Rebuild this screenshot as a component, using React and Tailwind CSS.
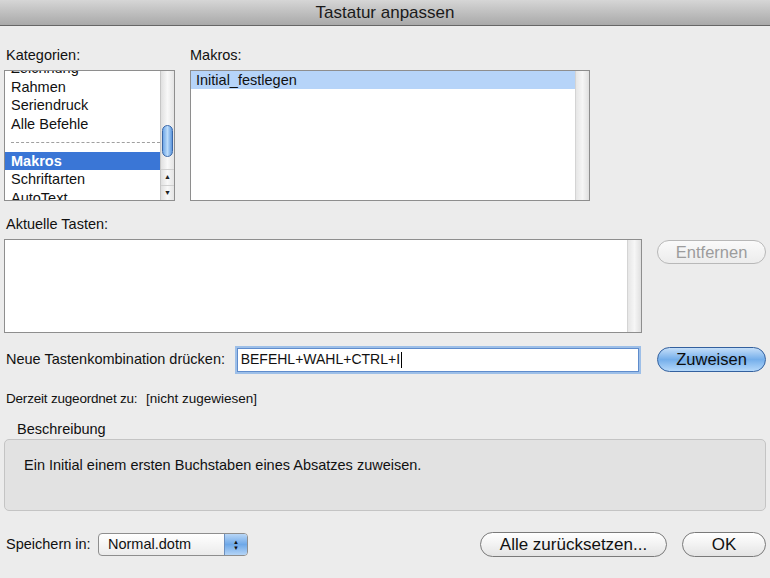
import React from 'react';

const categories = ['Zeichnung', 'Rahmen', 'Seriendruck', 'Alle Befehle', '---', 'Makros', 'Schriftarten', 'AutoText'];

const pill = 'flex items-center justify-center rounded-full border text-[16.5px] whitespace-nowrap';

const App = () => {
  return (
    <div className="w-[770px] h-[578px] overflow-hidden bg-[#ececec] text-[#111] font-['Liberation_Sans',Arial,sans-serif] text-[14.5px]">
      {/* Title bar */}
      <div className="h-[26px] flex items-center justify-center bg-gradient-to-b from-[#d6d6d6] to-[#a9a9a9] border-b border-[#666] text-[17px] text-[#1a1a1a]">
        Tastatur anpassen
      </div>

      <div className="px-[4px]">
        {/* Lists */}
        <div className="flex mt-[20px] gap-[15px]">
          <div className="w-[171px]">
            <div className="h-[18px] pl-[2px] leading-[18px]">Kategorien:</div>
            <div className="mt-[6px] h-[131px] flex bg-white border border-[#8e8e8e] overflow-hidden">
              <div className="flex-1 overflow-hidden">
                <div className="-mt-[12px]">
                  {categories.map((c) =>
                    c === '---' ? (
                      <div key={c} className="h-[18.5px] flex items-center pl-[6px]">
                        <div className="w-full border-t border-dashed border-[#a0a0a0]"></div>
                      </div>
                    ) : (
                      <div
                        key={c}
                        className={`h-[18.5px] leading-[18.5px] pl-[6px] whitespace-nowrap overflow-hidden ${c === 'Makros' ? 'bg-[#3a76d6] text-white font-semibold' : ''}`}
                      >
                        {c}
                      </div>
                    )
                  )}
                </div>
              </div>
              <div className="w-[14px] flex flex-col border-l border-[#c6c6c6] bg-gradient-to-r from-[#e0e0e0] via-[#f8f8f8] to-[#e4e4e4]">
                <div className="flex-1 flex justify-center">
                  <div className="mt-[54px] w-[11px] h-[32px] rounded-full border border-[#3a67a8] bg-gradient-to-r from-[#6ea6e6] via-[#bcdcfa] to-[#5c96dc]"></div>
                </div>
                <div className="h-[16px] flex items-center justify-center border-t border-[#d0d0d0] text-[7px] text-[#222]">▲</div>
                <div className="h-[15px] flex items-center justify-center border-t border-[#d0d0d0] text-[7px] text-[#222]">▼</div>
              </div>
            </div>
          </div>

          <div className="w-[400px]">
            <div className="h-[18px] leading-[18px]">Makros:</div>
            <div className="mt-[6px] h-[131px] flex bg-white border border-[#8e8e8e]">
              <div className="flex-1">
                <div className="h-[18px] leading-[18px] pl-[5px] bg-[#b6d4f9]">Initial_festlegen</div>
              </div>
              <div className="w-[14px] border-l border-[#d4d4d4] bg-gradient-to-r from-[#e6e6e6] via-[#f6f6f6] to-[#e0e0e0]"></div>
            </div>
          </div>
        </div>

        {/* Aktuelle Tasten */}
        <div className="mt-[14px] h-[18px] pl-[2px] leading-[18px]">Aktuelle Tasten:</div>
        <div className="mt-[6px] flex items-start">
          <div className="w-[639px] h-[94px] flex bg-white border border-[#8e8e8e]">
            <div className="flex-1"></div>
            <div className="w-[14px] border-l border-[#d4d4d4] bg-gradient-to-r from-[#e6e6e6] via-[#f6f6f6] to-[#e0e0e0]"></div>
          </div>
          <div className={`${pill} ml-[15px] mt-[1px] w-[109px] h-[24px] border-[#b8b8b8] bg-gradient-to-b from-[#fafafa] to-[#ececec] text-[#9c9c9c]`}>
            Entfernen
          </div>
        </div>

        {/* Neue Tastenkombination */}
        <div className="mt-[14px] flex items-center h-[25px]">
          <div className="w-[233px] pl-[2px] whitespace-nowrap">Neue Tastenkombination drücken:</div>
          <div className="w-[403px] h-[24px] flex items-center bg-white border border-[#5f8ccc] shadow-[0_0_0_2px_#9dbfe8] pl-[3px] text-[14px]">
            <span>BEFEHL+WAHL+CTRL+I</span>
            <span className="ml-[1px] w-[1px] h-[16px] bg-black"></span>
          </div>
          <div className={`${pill} ml-[18px] w-[109px] h-[25px] border-[#33609e] bg-gradient-to-b from-[#c4def8] via-[#74aeea] to-[#b4d8fa] text-[#0d0d0d]`}>
            Zuweisen
          </div>
        </div>

        {/* Derzeit */}
        <div className="mt-[18px] h-[18px] leading-[18px] pl-[2px] flex whitespace-nowrap">
          <span className="w-[140px] shrink-0 text-[13.5px] tracking-[-0.2px]">Derzeit zugeordnet zu:</span>
          <span className="text-[13.5px]">[nicht zugewiesen]</span>
        </div>

        {/* Beschreibung */}
        <div className="mt-[12px] h-[18px] leading-[18px] pl-[13px]">Beschreibung</div>
        <div className="mt-[1px] h-[72px] rounded-[5px] border border-[#c4c4c4] bg-[#e2e2e2] pl-[19px] pt-[16px] leading-[18px]">
          Ein Initial einem ersten Buchstaben eines Absatzes zuweisen.
        </div>

        {/* Bottom row */}
        <div className="mt-[21px] h-[25px] flex items-center">
          <span className="pl-[2px] w-[94px] whitespace-nowrap">Speichern in:</span>
          <div className="w-[150px] h-[23px] flex rounded-[4px] border border-[#8e8e8e] bg-gradient-to-b from-white to-[#ebebeb] overflow-hidden">
            <span className="flex-1 pl-[9px] leading-[21px]">Normal.dotm</span>
            <div className="w-[23px] flex flex-col items-center justify-center border-l border-[#6d8fbd] bg-gradient-to-b from-[#b8d6f6] via-[#6ea8e8] to-[#b4d4f6] text-[6px] leading-[6px] text-[#111]">
              <span>▲</span>
              <span>▼</span>
            </div>
          </div>
          <div className="flex-1"></div>
          <div className={`${pill} w-[187px] h-[25px] border-[#7a7a7a] bg-gradient-to-b from-white via-[#f2f2f2] to-[#e4e4e4] text-[17px]`}>
            Alle zurücksetzen...
          </div>
          <div className={`${pill} ml-[15px] w-[84px] h-[25px] border-[#7a7a7a] bg-gradient-to-b from-white via-[#f2f2f2] to-[#e4e4e4] text-[17px]`}>
            OK
          </div>
        </div>
      </div>
    </div>
  );
};

export default App;
